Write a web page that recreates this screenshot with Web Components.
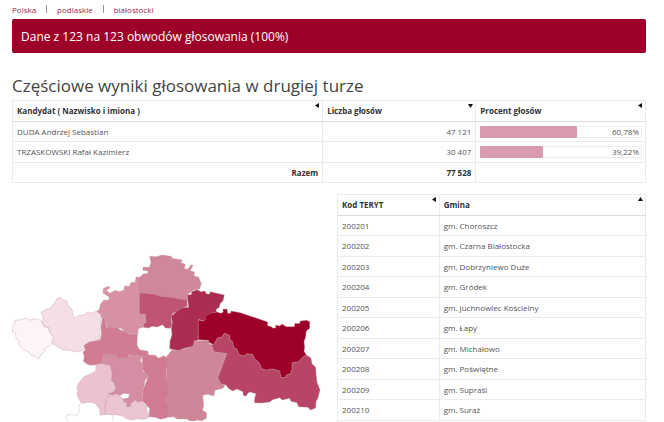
<!DOCTYPE html>
<html lang="pl">
<head>
<meta charset="utf-8">
<title>Wyniki głosowania – białostocki</title>
<style>
html { background: #fff; }
body {
  margin: 0;
  padding: 4px 18px 0 12px;
  font: 8px/12px "Open Sans", "Noto Sans", sans-serif;
  color: #555;
}
</style>
</head>
<body>
<results-page></results-page>
<script>
const tableCss = `
  :host { display: block; min-width: 0; }
  table { width: 100%; border-collapse: collapse; table-layout: fixed; }
  th, td { border: 1px solid #ebebeb; padding: 0 4px; text-align: left; height: 20px; box-sizing: border-box; line-height: 12px; }
  tr:nth-child(even) > td { height: 21px; }
  thead th { height: 21px; border-bottom-color: #ddd; padding: 0; }
  th { color: #333; font-weight: 700; }
  .num { text-align: right; }
`;

function define(name, html, setup) {
  const template = document.createElement('template');
  template.innerHTML = html;
  customElements.define(name, class extends HTMLElement {
    connectedCallback() {
      if (this.shadowRoot) return;
      this.attachShadow({ mode: 'open' }).append(template.content.cloneNode(true));
      if (setup) setup(this, this.shadowRoot);
    }
  });
}

define('crumb-trail', `
  <style>
    :host { display: block; }
    nav { display: flex; gap: 10px; line-height: 11px; }
    a { color: #a3244a; text-decoration: none; }
    i { width: 1px; height: 8px; margin: 1px 0; background: #999; }
  </style>
  <nav aria-label="Obszar"><a href="#polska">Polska</a><i></i><a href="#podlaskie">podlaskie</a><i></i><a href="#bialostocki">białostocki</a></nav>`);

define('status-banner', `
  <style>
    :host { display: block; margin-top: 4px; padding: 9px 9px 7px; border-radius: 2px; background: #9e0128; color: #fff; font-size: 12px; line-height: 18px; }
  </style><slot></slot>`);

define('sort-button', `
  <style>
    :host { display: block; }
    button { display: flex; justify-content: space-between; width: 100%; height: 20px; margin: 0; padding: 2px 2px 0 4px; border: 0; background: none; color: inherit; font: inherit; text-align: left; cursor: pointer; }
    span { line-height: 16px; }
    svg { width: 5px; height: 5px; fill: #111; flex: none; }
    :host([dir-mark=down]) svg { transform: rotate(-90deg); }
    :host([dir-mark=up]) svg { transform: rotate(90deg); }
  </style>
  <button type="button"><span><slot></slot></span><svg viewBox="0 0 5 5" aria-hidden="true"><path d="M4 0V5L0 2.5Z"/></svg></button>`);

define('vote-bar', `
  <style>
    :host { display: block; }
    .track { position: relative; display: flex; justify-content: flex-end; height: 12px; box-sizing: border-box; border: 1px solid #eee; border-radius: 2px; padding-right: 2px; line-height: 10px; }
    .fill { position: absolute; inset: -1px auto -1px -1px; background: #d79bad; border-radius: 1px; }
  </style>
  <div class="track"><div class="fill"></div><slot></slot></div>`,
  (host, root) => { root.querySelector('.fill').style.width = host.getAttribute('value') + '%'; });

define('candidate-table', `
  <style>${tableCss}
    .bar { padding: 0 3px 0 4px; }
    b { color: #333; }
  </style>
  <table>
    <colgroup><col style="width:49%"><col style="width:24.2%"><col></colgroup>
    <thead><tr>
      <th scope="col"><sort-button>Kandydat ( Nazwisko i imiona )</sort-button></th>
      <th scope="col"><sort-button dir-mark="down">Liczba głosów</sort-button></th>
      <th scope="col"><sort-button>Procent głosów</sort-button></th>
    </tr></thead>
    <tbody>
      <tr><td>DUDA Andrzej Sebastian</td><td class="num">47 121</td><td class="bar"><vote-bar value="60.78">60,78%</vote-bar></td></tr>
      <tr><td>TRZASKOWSKI Rafał Kazimierz</td><td class="num">30 407</td><td class="bar"><vote-bar value="39.22">39,22%</vote-bar></td></tr>
      <tr><th scope="row" class="num">Razem</th><td class="num"><b>77 528</b></td><td></td></tr>
    </tbody>
  </table>`);

define('commune-table', `
  <style>${tableCss}</style>
  <table>
    <colgroup><col style="width:33%"><col></colgroup>
    <thead><tr>
      <th scope="col"><sort-button>Kod TERYT</sort-button></th>
      <th scope="col"><sort-button dir-mark="up">Gmina</sort-button></th>
    </tr></thead>
    <tbody></tbody>
  </table>`,
  (host, root) => {
    const names = ['Choroszcz', 'Czarna Białostocka', 'Dobrzyniewo Duże', 'Gródek', 'Juchnowiec Kościelny', 'Łapy', 'Michałowo', 'Poświętne', 'Supraśl', 'Suraż'];
    root.querySelector('tbody').innerHTML = names.map((n, i) => `<tr><td>${200201 + i}</td><td>gm. ${n}</td></tr>`).join('');
  });

define('district-map', `
  <style>
    :host { display: block; min-width: 0; align-self: end; }
    svg { display: block; width: 100%; stroke: #b98e9b; stroke-opacity: .7; stroke-width: 1.5; stroke-linejoin: round; }
  </style>
  <svg viewBox="35 -3 939 546" role="img" aria-label="Mapa gmin powiatu białostockiego">
    <path fill="#fdf4f8" d="M36 258 45 250 43 241 56 240 75 235 90 241 98 236 118 240 126 246 130 259 144 263 148 278 160 292 157 308 148 318 136 323 131 337 121 345 115 358 105 351 92 346 84 335 69 329 58 318 56 302 47 295 46 281 37 275Z"/>
    <path fill="#f4dfe7" d="M122 217 136 208 150 206 158 193 165 188 168 177 180 171 187 180 199 183 203 197 215 208 218 225 223 234 237 226 252 224 260 217 275 220 289 213 303 222 300 240 304 253 297 272 299 290 298 299 282 301 273 318 262 318 245 332 226 336 207 330 190 330 174 321 158 313 156 302 162 292 150 278 146 262 132 259 126 244 129 231Z"/>
    <path fill="#d791a5" d="M290 215 298 206 300 193 310 181 325 181 327 172 308 158 309 146 324 138 329 144 317 151 329 160 345 151 356 155 370 151 373 138 388 139 391 128 405 127 407 111 420 112 440 150 437 225 430 260 414 266 412 283 395 281 375 276 362 265 346 262 322 265 313 235 305 237 301 222Z"/>
    <path fill="#d0869b" d="M448 49 471 50 483 45 512 49 518 56 545 59 542 68 555 73 552 86 562 88 573 74 578 76 569 92 583 96 580 107 595 112 599 123 603 130 598 146 580 150 563 162 561 182 530 175 500 172 481 169 465 162 430 159 416 158 415 115 430 101 442 101 443 93 428 91 428 82 447 82 452 68Z"/>
    <path fill="#bf5475" d="M418 160 440 160 465 163 481 169 510 172 560 180 561 199 548 203 538 214 519 219 513 229 514 255 510 265 495 264 487 254 470 261 455 259 445 264 429 262 431 250 437 249 435 222 418 222Z"/>
    <path fill="#d791a5" stroke="none" d="M412 222 436 223 437 249 431 250 429 258 414 264Z"/>
    <path fill="#ab2d52" d="M562 178 562 165 573 164 574 155 590 149 602 155 614 153 618 161 627 163 630 155 672 165 668 183 660 190 656 203 647 208 649 215 635 220 625 224 619 240 606 242 595 238 594 300 582 303 579 319 553 325 534 332 515 328 508 326 509 303 515 285 513 264 516 246 513 229 532 212 547 203 565 202Z"/>
    <path fill="#9e0128" d="M594 240 609 243 617 238 615 228 630 220 649 216 662 220 669 216 667 208 680 207 682 220 691 220 692 213 720 218 802 246 802 257 813 260 818 265 826 263 826 255 838 258 845 252 858 260 882 260 884 250 897 251 900 243 919 241 928 245 928 265 918 273 916 290 911 305 913 322 911 334 918 345 905 353 897 365 875 369 876 388 870 402 858 405 855 413 842 413 839 402 838 393 815 387 799 391 783 386 777 369 762 356 757 344 740 341 731 349 716 344 710 328 700 324 696 305 689 300 687 286 672 280 664 292 652 294 640 314 625 307 624 301 594 299Z"/>
    <path fill="#b84566" d="M628 315 640 313 652 294 664 292 672 280 687 286 689 300 696 305 700 324 710 328 716 344 731 349 740 341 757 344 762 356 777 369 783 386 799 391 815 387 838 393 842 413 855 413 858 405 870 402 876 388 875 369 897 365 905 353 918 345 932 354 935 371 946 382 947 400 950 427 959 450 953 473 947 485 946 504 931 510 922 502 895 500 890 488 872 484 868 475 846 480 838 473 817 479 808 486 785 489 762 488 763 475 767 461 750 456 744 458 737 469 728 465 728 455 716 450 710 447 697 453 684 445 677 435 661 432 652 413 659 395 679 341 640 335Z"/>
    <path fill="#d08699" d="M582 303 624 301 629 314 638 320 640 335 679 341 652 412 662 431 674 435 668 445 650 449 644 451 640 468 622 463 607 466 610 498 606 510 619 519 618 535 605 542 590 540 574 546 560 537 530 537 520 530 500 532 498 350 515 330 535 332 579 319Z"/>
    <path fill="#d17b93" d="M440 345 465 346 475 355 490 347 500 354 502 370 497 390 499 420 505 450 498 480 504 503 500 533 480 538 465 532 446 530 448 505 426 482 427 452 444 410 426 388 426 352Z"/>
    <path fill="#d17c93" d="M302 263 306 235 313 237 319 263 350 262 362 271 375 275 390 282 411 283 410 315 417 329 443 334 444 346 425 351 410 345 397 350 388 343 379 356 349 356 347 345 310 344 306 370 288 374 272 376 261 373 249 364 252 351 248 336 255 329 251 316 267 306 300 300 303 284Z"/>
    <path fill="#d58da3" d="M310 345 347 345 349 356 379 356 388 345 397 350 410 345 425 351 420 361 429 379 427 394 438 401 443 412 434 421 429 448 425 459 426 484 412 487 405 481 391 492 391 500 378 500 380 489 370 487 368 477 384 474 388 462 370 460 358 467 348 461 337 466 324 461 340 455 346 444 341 430 332 420 335 402 330 377 306 371Z"/>
    <path fill="#ecc2d0" d="M288 373 306 371 330 377 335 402 332 420 341 430 346 444 339 456 322 460 328 470 317 475 318 492 312 504 317 523 300 526 298 508 284 490 264 486 245 490 237 480 230 461 235 449 229 447 233 432 251 410 270 402 286 393Z"/>
    <path fill="#ecc5d2" d="M324 461 337 466 348 461 358 467 368 477 370 487 380 489 378 500 391 500 391 492 405 481 412 487 426 484 430 494 441 496 439 511 447 525 443 535 425 538 409 536 399 540 377 536 369 529 349 524 330 524 317 523 312 504 318 492 317 475 328 470Z"/>
    <path fill="none" stroke="#aaa" d="M242 488 235 498 237 511 230 527 215 523 197 526 198 537 205 546M338 525V546"/>
  </svg>`);

define('results-page', `
  <style>
    :host { display: block; }
    h1 { margin: 20px 0 2px; font-size: 17px; line-height: 25px; font-weight: 400; color: #444; }
    .split { display: grid; grid-template-columns: minmax(0, 313fr) minmax(0, 309fr); gap: 12px; margin-top: 11px; }
  </style>
  <crumb-trail></crumb-trail>
  <status-banner role="status">Dane z 123 na 123 obwodów głosowania (100%)</status-banner>
  <main>
    <h1>Częściowe wyniki głosowania w drugiej turze</h1>
    <candidate-table></candidate-table>
    <div class="split"><district-map></district-map><commune-table></commune-table></div>
  </main>`);
</script>
</body>
</html>
